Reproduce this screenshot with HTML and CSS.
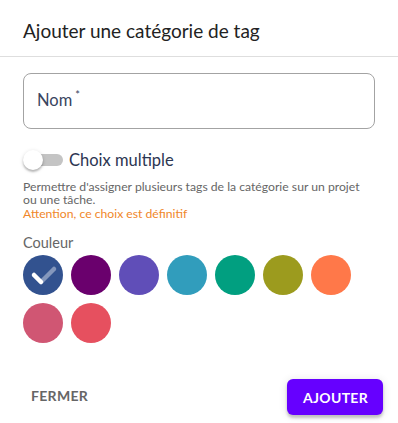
FILE: index.html
```html
<!DOCTYPE html>
<html lang="fr">
<head>
<meta charset="utf-8">
<link rel="stylesheet" href="styles.css">
</head>
<body>
<div class="dialog">
  <div class="header">Ajouter une catégorie de tag</div>
  <div class="content">
    <div class="field"><span class="label">Nom<sup>*</sup></span></div>
    <div class="switch-row">
      <span class="switch"><span class="track"></span><span class="thumb"></span></span>
      <span class="switch-label">Choix multiple</span>
    </div>
    <p class="help">Permettre d'assigner plusieurs tags de la catégorie sur un projet ou une tâche.</p>
    <p class="warn">Attention, ce choix est définitif</p>
    <div class="color-label">Couleur</div>
    <div class="colors">
      <span class="dot c1 selected">
        <svg viewBox="0 0 40 40" width="40" height="40">
          <line x1="18" y1="27" x2="31" y2="14" stroke="rgba(255,255,255,0.4)" stroke-width="4.5" stroke-linecap="round"/>
          <line x1="11" y1="20" x2="18" y2="27" stroke="#fff" stroke-width="4.5" stroke-linecap="round"/>
        </svg>
      </span>
      <span class="dot c2"></span>
      <span class="dot c3"></span>
      <span class="dot c4"></span>
      <span class="dot c5"></span>
      <span class="dot c6"></span>
      <span class="dot c7"></span>
      <span class="dot c8"></span>
      <span class="dot c9"></span>
    </div>
  </div>
  <div class="actions">
    <button class="btn btn-text">FERMER</button>
    <button class="btn btn-primary">AJOUTER</button>
  </div>
</div>
</body>
</html>
```
FILE: styles.css
```css
html, body {
  margin: 0;
  padding: 0;
  background: #fff;
}
body {
  font-family: "Lato", "Open Sans", sans-serif;
  width: 398px;
  height: 423px;
  overflow: hidden;
}
.dialog {
  width: 398px;
  height: 423px;
  background: #fff;
  border-radius: 4px;
  display: flex;
  flex-direction: column;
}
.header {
  padding: 19px 23px 13px;
  font-size: 19px;
  line-height: 24px;
  color: #222;
  border-bottom: 1px solid #dedede;
}
.content {
  padding: 16px 23px 0;
  flex: 1;
}
.field {
  box-sizing: border-box;
  height: 56px;
  border: 1px solid #a3a3a3;
  border-radius: 8px;
  display: flex;
  align-items: center;
  padding: 0 13px 3px;
}
.label {
  font-size: 16.5px;
  color: #3a4560;
}
.label sup {
  font-size: 11px;
  margin-left: 3px;
  vertical-align: 7px;
  line-height: 0;
}
.switch-row {
  display: flex;
  align-items: center;
  height: 38px;
  margin-top: 12px;
}
.switch {
  position: relative;
  width: 42px;
  height: 38px;
  flex: none;
}
.track {
  position: absolute;
  left: 4px;
  top: 13px;
  width: 36px;
  height: 12px;
  border-radius: 6px;
  background: #c4c4c4;
}
.thumb {
  position: absolute;
  left: 0;
  top: 9px;
  width: 20px;
  height: 20px;
  border-radius: 50%;
  background: #fff;
  box-shadow: 0 2px 2px rgba(0,0,0,0.22), 0 1px 4px rgba(0,0,0,0.14);
}
.switch-label {
  margin-left: 4px;
  font-size: 16.5px;
  color: #2c3652;
}
.help, .warn {
  margin: 0;
  font-size: 12.2px;
  line-height: 13px;
}
.help {
  margin-top: 1px;
  color: #666;
}
.warn {
  margin-top: 1px;
  color: #f0872a;
}
.color-label {
  margin-top: 14px;
  font-size: 14.5px;
  line-height: 18px;
  color: #666;
}
.colors {
  margin-top: 3px;
  display: flex;
  flex-wrap: wrap;
  gap: 8px;
  width: 340px;
}
.dot {
  width: 40px;
  height: 40px;
  border-radius: 50%;
  display: block;
}
.dot svg { display: block; }
.c1 { background: #32528f; }
.c2 { background: #6a006d; }
.c3 { background: #604eb8; }
.c4 { background: #319dbc; }
.c5 { background: #019f80; }
.c6 { background: #9c9b1e; }
.c7 { background: #ff7849; }
.c8 { background: #d05673; }
.c9 { background: #e6505f; }
.actions {
  display: flex;
  justify-content: space-between;
  align-items: center;
  padding: 0 15px 8px 23px;
}
.btn {
  font-family: inherit;
  font-size: 14px;
  font-weight: 700;
  letter-spacing: 0.3px;
  border: none;
  border-radius: 6px;
  height: 36px;
  padding: 0 8px;
  cursor: pointer;
}
.btn-text {
  background: transparent;
  color: #666;
  padding-bottom: 3px;
}
.btn-primary {
  background: #6600ff;
  color: #fff;
  padding: 0 16px;
  width: 96px;
  box-shadow: 0 3px 3px rgba(0,0,0,0.2), 0 1px 8px rgba(0,0,0,0.12);
}
```
